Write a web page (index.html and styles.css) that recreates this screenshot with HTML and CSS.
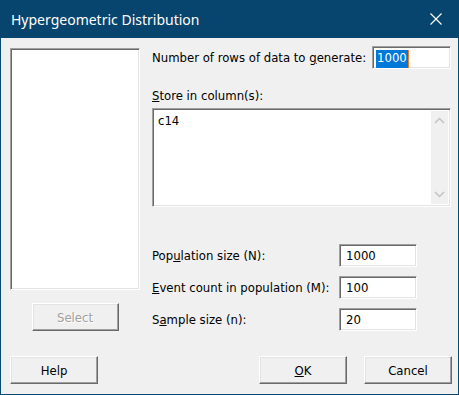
FILE: index.html
```html
<!DOCTYPE html>
<html lang="en">

    <head>
        <meta charset="UTF-8">
        <meta name="viewport" content="width=device-width, initial-scale=1.0">
        <title>Hypergeometric Distribution</title>

        <link rel="stylesheet" href="styles.css">

    </head>

    <body>
        <div class="window">
            <div class="title-bar">
                <span class="title">Hypergeometric Distribution</span>
                <svg class="close" width="12" height="12" viewBox="0 0 12 12">
                    <path d="M0.5 0.5 L11.5 11.5 M11.5 0.5 L0.5 11.5" stroke="#fff" stroke-width="1.2" fill="none"/>
                </svg>
            </div>

            <div class="content">
                <div class="main">
                    <div class="left-col">
                        <div class="listbox"></div>
                        <button class="btn btn-select" disabled>Select</button>
                    </div>

                    <div class="right-col">
                        <div class="row-top">
                            <label>Number of rows of data to <u>g</u>enerate:</label>
                            <div class="field field-rows"><span class="selected">1000</span><span class="caret"></span></div>
                        </div>

                        <label class="store-label"><u>S</u>tore in column(s):</label>
                        <div class="column-box">
                            <div class="column-text">c14</div>
                            <div class="scrollbar">
                                <svg width="11" height="7" viewBox="0 0 11 7"><path d="M1 6 L5.5 1.5 L10 6" stroke="#c3c3c3" stroke-width="1.5" fill="none"/></svg>
                                <svg width="11" height="7" viewBox="0 0 11 7"><path d="M1 1 L5.5 5.5 L10 1" stroke="#c3c3c3" stroke-width="1.5" fill="none"/></svg>
                            </div>
                        </div>

                        <div class="params">
                            <div class="param-row">
                                <label>Pop<u>u</u>lation size (N):</label>
                                <div class="field">1000</div>
                            </div>
                            <div class="param-row">
                                <label><u>E</u>vent count in population (M):</label>
                                <div class="field">100</div>
                            </div>
                            <div class="param-row">
                                <label>S<u>a</u>mple size (n):</label>
                                <div class="field">20</div>
                            </div>
                        </div>
                    </div>
                </div>

                <div class="footer">
                    <button class="btn">Help</button>
                    <div class="footer-right">
                        <button class="btn"><u>O</u>K</button>
                        <button class="btn">Cancel</button>
                    </div>
                </div>
            </div>
        </div>
    </body>

</html>
```

FILE: styles.css
```css
* {
    margin: 0;
    padding: 0;
    box-sizing: border-box;
}

body {
    font-family: 'DejaVu Sans', sans-serif;
    font-stretch: condensed;
    font-size: 13px;
    color: #000;
    background-color: #f0f0f0;
}

.window {
    width: 459px;
    height: 395px;
    border: 1px solid #0a4a72;
    border-top: none;
    background-color: #f0f0f0;
    display: flex;
    flex-direction: column;
}

.title-bar {
    height: 38px;
    margin: 0 -1px;
    padding: 0 17px 0 11px;
    background-color: #07456e;
    color: #fff;
    display: flex;
    align-items: center;
    justify-content: space-between;
}

.title {
    font-family: 'Noto Sans', sans-serif;
    font-stretch: normal;
    font-size: 14px;
}

.content {
    flex: 1;
    padding: 8px 6px 0 9px;
    display: flex;
    flex-direction: column;
}

.main {
    display: flex;
    gap: 12px;
}

.left-col {
    width: 130px;
    padding-top: 2px;
    display: flex;
    flex-direction: column;
    align-items: center;
}

.listbox {
    width: 130px;
    height: 242px;
    background-color: #fff;
    border: 1px solid;
    border-color: #a0a0a0 #fff #fff #a0a0a0;
    box-shadow: inset 1px 1px 0 #696969, inset -1px -1px 0 #e3e3e3;
}

.btn {
    width: 88px;
    height: 28px;
    font-family: inherit;
    font-stretch: condensed;
    font-size: 13px;
    color: #000;
    background-color: #f0f0f0;
    border: 1px solid;
    border-color: #fff #696969 #696969 #fff;
    box-shadow: inset -1px -1px 0 #a0a0a0, inset 1px 1px 0 #e3e3e3;
}

.btn-select {
    width: 87px;
    margin-top: 13px;
    color: #a0a0a0;
    text-shadow: 1px 1px 0 #fff;
}

.right-col {
    width: 299px;
    display: flex;
    flex-direction: column;
}

.row-top {
    display: flex;
    align-items: center;
    justify-content: space-between;
}

.field {
    width: 78px;
    height: 23px;
    padding: 3px 0 0 5px;
    background-color: #fff;
    border: 1px solid;
    border-color: #a0a0a0 #fff #fff #a0a0a0;
    box-shadow: inset 1px 1px 0 #696969, inset -1px -1px 0 #e3e3e3;
    line-height: 16px;
}

.field-rows {
    width: 79px;
    padding-left: 3px;
    display: flex;
}

.selected {
    background-color: #0078d7;
    color: #fff;
    padding: 0 1px;
}

.caret {
    width: 1px;
    background-color: #f07b1a;
}

.store-label {
    margin-top: 19px;
    line-height: 16px;
}

.column-box {
    margin-top: 4px;
    height: 99px;
    background-color: #fff;
    border: 1px solid;
    border-color: #a0a0a0 #fff #fff #a0a0a0;
    box-shadow: inset 1px 1px 0 #696969, inset -1px -1px 0 #e3e3e3;
    padding: 2px;
    display: flex;
    justify-content: space-between;
}

.column-text {
    padding: 2px 0 0 3px;
}

.scrollbar {
    width: 17px;
    background-color: #f0f0f0;
    display: flex;
    flex-direction: column;
    justify-content: space-between;
    align-items: center;
    padding: 6px 0 6px;
}

.params {
    margin-top: 37px;
    display: flex;
    flex-direction: column;
    gap: 9px;
}

.param-row {
    display: flex;
    align-items: center;
    justify-content: space-between;
    padding-right: 34px;
}

.param-row .field {
    padding-left: 6px;
}

.footer {
    margin-top: 25px;
    display: flex;
    justify-content: space-between;
}

.footer-right {
    display: flex;
    gap: 17px;
}
```
